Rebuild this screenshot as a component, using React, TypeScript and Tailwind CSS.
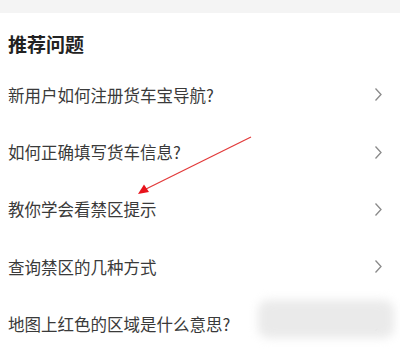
import React from "react";

const items = [
  "新用户如何注册货车宝导航?",
  "如何正确填写货车信息?",
  "教你学会看禁区提示",
  "查询禁区的几种方式",
  "地图上红色的区域是什么意思?",
];

function Chevron() {
  return (
    <svg width="9" height="15" viewBox="0 0 9 15" className="shrink-0">
      <path d="M1.5 1.5 L7 7.5 L1.5 13.5" fill="none" stroke="#8a8a8a" strokeWidth="1.3" />
    </svg>
  );
}

export default function App() {
  return (
    <div
      className="relative w-[400px] h-[351px] overflow-hidden bg-white"
      style={{ fontFamily: '"Noto Sans CJK SC", "Noto Sans", sans-serif' }}
    >
      <div className="h-[13px] bg-[#f4f4f4]" />
      <div className="h-[53px] pl-[8px] pt-[21px]">
        <div className="text-[19px] leading-[20px] font-bold text-[#222]">推荐问题</div>
      </div>
      <div className="flex flex-col">
        {items.map((t) => (
          <div key={t} className="h-[57.4px] flex items-center justify-between pl-[8px] pr-[17px]">
            <span className="text-[16.5px] leading-[20px] text-[#3a3a3a]">{t}</span>
            <Chevron />
          </div>
        ))}
      </div>
      <svg className="absolute left-0 top-0 pointer-events-none" width="400" height="351">
        <line x1="251" y1="137" x2="146" y2="189" stroke="#e23b3b" strokeWidth="1.3" />
        <polygon points="138,194 144,184.5 149,192" fill="#e8131c" />
      </svg>
      <div className="absolute left-[258px] top-[300px] w-[136px] h-[38px] rounded-[10px] bg-[#eaeaea] blur-[5px]" />
    </div>
  );
}
